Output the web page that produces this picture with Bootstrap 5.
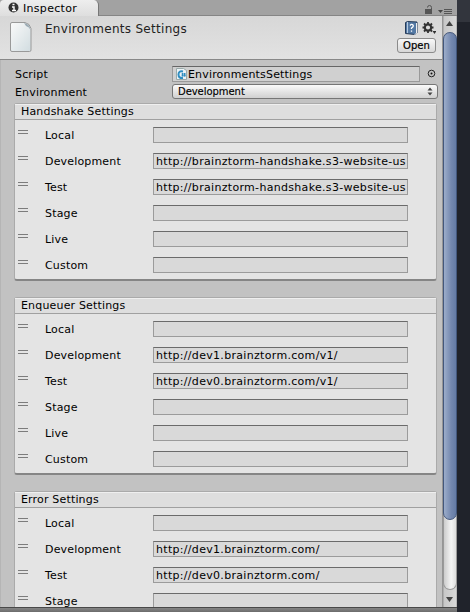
<!DOCTYPE html>
<html lang="en">
<head>
<meta charset="utf-8">
<title>Inspector</title>
<link rel="stylesheet" href="https://cdn.jsdelivr.net/npm/bootstrap@5.3.0/dist/css/bootstrap.min.css">
<style>
html,body{height:612px;overflow:hidden}
body{background:linear-gradient(#32353d 22px,#20232b 22px);font-family:"DejaVu Sans",sans-serif;font-size:11px;line-height:16px;color:#000;letter-spacing:.17px;white-space:nowrap}
svg{display:block;flex:none}
.pane{width:457px;height:612px;background:#c2c2c2}
.tabs{height:16px;background:#a2a2a2;border-bottom:1px solid #858585}
.tab-on{width:99px;height:16px;background:linear-gradient(#eee,#dedede);border-right:1px solid #777;border-radius:4px 5px 0 0;padding-left:7px}
.tab-icon{margin-top:2px}
.tab-text{padding-top:1px;margin-left:4px;letter-spacing:.3px}
.main{height:591px}
.view{width:442px;height:591px;overflow:hidden;background:linear-gradient(90deg,#b5b5b5 1px,transparent 1px)}
.head{height:44px;background:linear-gradient(#d7d7d7,#e2e2e2);border-bottom:1px solid #888;padding:6px 6px 0 10px}
.head-title{font-size:12px;margin-left:12px;margin-top:-1px;letter-spacing:.29px;color:#222}
.head-icons{margin-top:-2px}
.open-btn{width:39px;height:15px;line-height:14px;border:1px solid #8b8b8b;border-radius:3px;background:linear-gradient(#f8f8f8,#d8d8d8);font-size:10px;color:#000;letter-spacing:.1px;-webkit-text-stroke:.2px #000}
.props{padding:6px 4px 0 15px;height:43px}
.prop{height:18px}
.prop-name{width:157px;padding-top:1px}
.objfield{width:248px;height:16px;background:#d0d0d0;border:1px solid #999;border-top-color:#666;line-height:16px;padding-left:3px}
.popup{width:266px;height:15px;border:1px solid #767676;border-radius:3px;background:linear-gradient(#fafafa,#d0d0d0);font-size:10px;line-height:14px;padding:0 4px 0 5px;letter-spacing:-.05px;-webkit-text-stroke:.15px #000}
.group{width:423px;height:178px;margin:0 0 16px 14px;background:#e4e4e4;border:1px solid #aaa;border-bottom:2px solid #858585;border-radius:3px}
.group-head{height:16px;background:#dedede;border-bottom:1px solid #a0a0a0;border-top:1px solid #efefef;padding-left:6px;line-height:14px}
.rows{padding:7px 0 0 3px}
.entry{height:16px;margin-bottom:10px}
.grip{width:10px;height:4px;border-top:1px solid #7c7c7c;border-bottom:1px solid #7c7c7c;margin-top:-6px}
.entry-name{width:108px;margin-left:17px;padding-top:2px}
.field{width:255px;height:16px;background:#d9d9d9;border:1px solid #9b9b9b;border-top-color:#6b6b6b;line-height:15px;padding-left:2px;overflow:hidden;letter-spacing:.31px}
.sbar{width:15px;background:linear-gradient(90deg,#959595 1px,#c8c8c8 2px,#d8d8d8 14px,#999)}
.track{width:14px;height:558px;background:linear-gradient(90deg,#ccc,#f4f4f4 60%,#ddd);border:1px solid #999;border-top:0;border-radius:7px;margin-left:1px}
.thumb{width:14px;height:488px;margin-left:-1px;background:linear-gradient(90deg,#9cadca,#7488af 60%,#647ba5);border:1px solid #43577c;border-radius:7px}
.foot{height:5px;background:linear-gradient(#494949 1px,#858585 1px,#6c6c6c)}
</style>
<script src="https://cdn.jsdelivr.net/npm/bootstrap@5.3.0/dist/js/bootstrap.bundle.min.js"></script>
</head>
<body>
<div class="pane">
 <div class="tabs d-flex justify-content-between">
  <div class="tab-on d-flex"><svg class="tab-icon" width="12" height="12"><circle cx="6.500" cy="5.500" r="5" fill="#333"/><path d="M5.500 2.500h2M5 5h2v3.500M5 8.500h4" stroke="#fff" stroke-width="1.400" fill="none"/></svg><span class="tab-text">Inspector</span></div>
  <svg width="34" height="16"><path d="M2 9h7v5H2z" fill="#555"/><path d="M8.500 9V7.500Q8.500 5.500 6.500 5.500T4.500 7.500" fill="none" stroke="#555"/><path d="M15 10h5l-2.500 3z" fill="#444"/><path d="M21 9.500h8M21 11.500h8M21 13.500h8" stroke="#555"/></svg>
 </div>
 <div class="main d-flex">
  <div class="view">
   <div class="head d-flex">
    <svg width="23" height="31"><defs><linearGradient id="pg" x2="1" y2="1"><stop stop-color="#fafafa"/><stop offset="1" stop-color="#d1dce0"/></linearGradient></defs><path d="M2 .5h13q5 1 6 6V28q0 1.500-1.500 1.500H2Q.5 29.500.5 28V2Q.5.5 2 .5z" fill="url(#pg)" stroke="#999"/><path d="M14 1q6 1 6.500 7-1-3-4.500-4z" fill="#9babb4"/></svg>
    <div class="head-title flex-grow-1">Environments Settings</div>
    <div class="d-flex flex-column align-items-end">
     <svg class="head-icons" width="33" height="18"><path d="M2.500 2.500l2-1 9.500.5v11l-2 1.500-9.500-1z" fill="#5479a4" stroke="#263b58"/><path d="M4.500 2v11" stroke="#b8cce0"/><path d="M13.500 3v10.500l-2 1" stroke="#eee" fill="none"/><path d="M7 5.500Q8.500 3.500 10 5q1 1.500-1.500 3v1M8.500 10.500v1.300" stroke="#fff" stroke-width="1.300" fill="none"/><circle cx="25" cy="7.500" r="3.200" fill="none" stroke="#333" stroke-width="2.200"/><path d="M25 2v2M25 11v2M19.500 7.500h2M28.500 7.500h2M21 3.500l1.500 1.500M27.500 10l1.500 1.500M21 11.500l1.500-1.500M27.500 5l1.500-1.500" stroke="#333" stroke-width="1.800"/><path d="M29.500 11h4l-2 3z" fill="#333"/></svg>
     <div class="open-btn text-center">Open</div>
    </div>
   </div>
   <div class="props">
    <div class="prop d-flex"><div class="prop-name">Script</div><div class="objfield d-flex"><svg width="12" height="14"><path d="M.5 1.500h7l3 2v9H.5z" fill="#edf3f6" stroke="#9aa"/><path d="M7 4.500Q2.500 3.500 2.500 7.500t4.500 3.500" fill="none" stroke="#2f8dc0" stroke-width="2"/><path d="M6.500 6v3.500M8.500 6v3.500M5.500 7h4.500M5.500 8.800h4.500" fill="none" stroke="#2f8dc0"/></svg><span>EnvironmentsSettings</span></div><svg width="17" height="16"><circle cx="11.500" cy="7.500" r="3.300" fill="none" stroke="#222"/><circle cx="11.500" cy="7.500" r="1" fill="#111"/></svg></div>
    <div class="prop d-flex"><div class="prop-name">Environment</div><div class="popup d-flex justify-content-between"><span>Development</span><svg width="6" height="13"><path d="M.5 5.500h5L3 2.500zM.5 7.500h5L3 10.500z" fill="#444"/></svg></div></div>
   </div>
   <div class="group">
    <div class="group-head">Handshake Settings</div>
    <div class="rows">
     <div class="entry d-flex align-items-center"><div class="grip"></div><div class="entry-name">Local</div><div class="field"></div></div>
     <div class="entry d-flex align-items-center"><div class="grip"></div><div class="entry-name">Development</div><div class="field">http://brainztorm-handshake.s3-website-us</div></div>
     <div class="entry d-flex align-items-center"><div class="grip"></div><div class="entry-name">Test</div><div class="field">http://brainztorm-handshake.s3-website-us</div></div>
     <div class="entry d-flex align-items-center"><div class="grip"></div><div class="entry-name">Stage</div><div class="field"></div></div>
     <div class="entry d-flex align-items-center"><div class="grip"></div><div class="entry-name">Live</div><div class="field"></div></div>
     <div class="entry d-flex align-items-center"><div class="grip"></div><div class="entry-name">Custom</div><div class="field"></div></div>
    </div>
   </div>
   <div class="group">
    <div class="group-head">Enqueuer Settings</div>
    <div class="rows">
     <div class="entry d-flex align-items-center"><div class="grip"></div><div class="entry-name">Local</div><div class="field"></div></div>
     <div class="entry d-flex align-items-center"><div class="grip"></div><div class="entry-name">Development</div><div class="field">http://dev1.brainztorm.com/v1/</div></div>
     <div class="entry d-flex align-items-center"><div class="grip"></div><div class="entry-name">Test</div><div class="field">http://dev0.brainztorm.com/v1/</div></div>
     <div class="entry d-flex align-items-center"><div class="grip"></div><div class="entry-name">Stage</div><div class="field"></div></div>
     <div class="entry d-flex align-items-center"><div class="grip"></div><div class="entry-name">Live</div><div class="field"></div></div>
     <div class="entry d-flex align-items-center"><div class="grip"></div><div class="entry-name">Custom</div><div class="field"></div></div>
    </div>
   </div>
   <div class="group">
    <div class="group-head">Error Settings</div>
    <div class="rows">
     <div class="entry d-flex align-items-center"><div class="grip"></div><div class="entry-name">Local</div><div class="field"></div></div>
     <div class="entry d-flex align-items-center"><div class="grip"></div><div class="entry-name">Development</div><div class="field">http://dev1.brainztorm.com/</div></div>
     <div class="entry d-flex align-items-center"><div class="grip"></div><div class="entry-name">Test</div><div class="field">http://dev0.brainztorm.com/</div></div>
     <div class="entry d-flex align-items-center"><div class="grip"></div><div class="entry-name">Stage</div><div class="field"></div></div>
    </div>
   </div>
  </div>
  <div class="sbar">
   <svg width="15" height="16"><path d="M4 10h7L7.500 5z" fill="#444"/></svg>
   <div class="track"><div class="thumb"></div></div>
   <svg width="15" height="17"><path d="M4 7h7l-3.500 5z" fill="#444"/></svg>
  </div>
 </div>
 <div class="foot"></div>
</div>
</body>
</html>
